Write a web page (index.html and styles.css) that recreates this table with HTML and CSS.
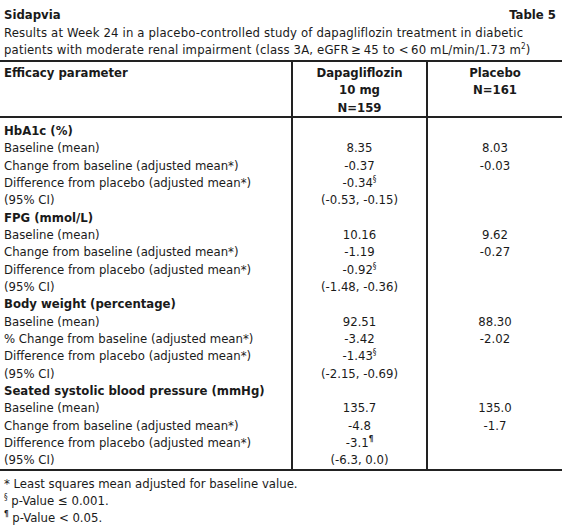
FILE: index.html
```html
<!DOCTYPE html>
<html lang="en">
<head>
    <meta charset="UTF-8">
    <title>Sidapvia - Table 5</title>
    <link rel="stylesheet" href="styles.css">
</head>
<body>
    <div class="table-block">
        <div class="caption-top">
            <span class="brand">Sidapvia</span>
            <span class="table-no">Table 5</span>
        </div>
        <p class="caption">Results at Week 24 in a placebo-controlled study of dapagliflozin treatment in diabetic<br>patients with moderate renal impairment (class 3A, eGFR&thinsp;&ge;&thinsp;45 to &lt;&thinsp;60 mL/min/1.73 m<sup>2</sup>)</p>

        <table class="efficacy">
            <thead>
                <tr>
                    <th class="param">Efficacy parameter</th>
                    <th>Dapagliflozin<br>10 mg<br>N=159</th>
                    <th>Placebo<br>N=161</th>
                </tr>
            </thead>
            <tbody>
                <tr class="group"><td>HbA1c (%)</td><td></td><td></td></tr>
                <tr><td>Baseline (mean)</td><td>8.35</td><td>8.03</td></tr>
                <tr><td>Change from baseline (adjusted mean*)</td><td>-0.37</td><td>-0.03</td></tr>
                <tr><td>Difference from placebo (adjusted mean*)</td><td>-0.34<sup>&sect;</sup></td><td></td></tr>
                <tr><td>(95% CI)</td><td>(-0.53, -0.15)</td><td></td></tr>

                <tr class="group"><td>FPG (mmol/L)</td><td></td><td></td></tr>
                <tr><td>Baseline (mean)</td><td>10.16</td><td>9.62</td></tr>
                <tr><td>Change from baseline (adjusted mean*)</td><td>-1.19</td><td>-0.27</td></tr>
                <tr><td>Difference from placebo (adjusted mean*)</td><td>-0.92<sup>&sect;</sup></td><td></td></tr>
                <tr><td>(95% CI)</td><td>(-1.48, -0.36)</td><td></td></tr>

                <tr class="group"><td>Body weight (percentage)</td><td></td><td></td></tr>
                <tr><td>Baseline (mean)</td><td>92.51</td><td>88.30</td></tr>
                <tr><td>% Change from baseline (adjusted mean*)</td><td>-3.42</td><td>-2.02</td></tr>
                <tr><td>Difference from placebo (adjusted mean*)</td><td>-1.43<sup>&sect;</sup></td><td></td></tr>
                <tr><td>(95% CI)</td><td>(-2.15, -0.69)</td><td></td></tr>

                <tr class="group"><td>Seated systolic blood pressure (mmHg)</td><td></td><td></td></tr>
                <tr><td>Baseline (mean)</td><td>135.7</td><td>135.0</td></tr>
                <tr><td>Change from baseline (adjusted mean*)</td><td>-4.8</td><td>-1.7</td></tr>
                <tr><td>Difference from placebo (adjusted mean*)</td><td>-3.1<sup class="pilcrow">&para;</sup></td><td></td></tr>
                <tr><td>(95% CI)</td><td>(-6.3, 0.0)</td><td></td></tr>
            </tbody>
        </table>

        <div class="notes">
            <div>* Least squares mean adjusted for baseline value.</div>
            <div><sup>&sect;</sup> p-Value &le; 0.001.</div>
            <div><sup class="pilcrow">&para;</sup> p-Value &lt; 0.05.</div>
        </div>
    </div>
</body>
</html>
```

FILE: styles.css
```css
body {
    margin: 0;
    background-color: #fff;
    color: #1a1a1a;
    font-family: 'DejaVu Sans Condensed', 'DejaVu Sans', sans-serif;
    font-stretch: condensed;
    font-size: 13px;
}
.table-block {
    width: 562px;
}
.caption-top {
    display: flex;
    justify-content: space-between;
    padding: 6px 6px 0 4px;
    font-weight: bold;
    line-height: 17px;
}
.caption {
    margin: 0;
    padding: 1px 4px 2px 4px;
    line-height: 17px;
    letter-spacing: 0.15px;
    white-space: nowrap;
}
sup {
    font-size: 8px;
    line-height: 0;
    vertical-align: 5px;
}
.pilcrow {
    font-weight: bold;
}
.efficacy {
    width: 100%;
    border-collapse: collapse;
    border-top: 2px solid #222;
    border-bottom: 2px solid #222;
}
.efficacy th,
.efficacy td {
    padding: 0;
    line-height: 17.33px;
    vertical-align: top;
    text-align: center;
    white-space: nowrap;
}
.efficacy th {
    padding: 2px 0 0 0;
    border-bottom: 2px solid #222;
    font-weight: bold;
}
.efficacy th + th,
.efficacy td + td {
    border-left: 2px solid #222;
}
.efficacy th:first-child,
.efficacy td:first-child {
    width: 287px;
    padding-left: 4px;
    text-align: left;
}
.efficacy th:nth-child(2),
.efficacy td:nth-child(2) {
    width: 133px;
}
.efficacy tbody tr:first-child td {
    padding-top: 4px;
}
.efficacy tbody tr:last-child td {
    padding-bottom: 0;
}
.group td:first-child {
    font-weight: bold;
}
.notes {
    padding: 4px 4px 0 4px;
    line-height: 17.4px;
}
```
